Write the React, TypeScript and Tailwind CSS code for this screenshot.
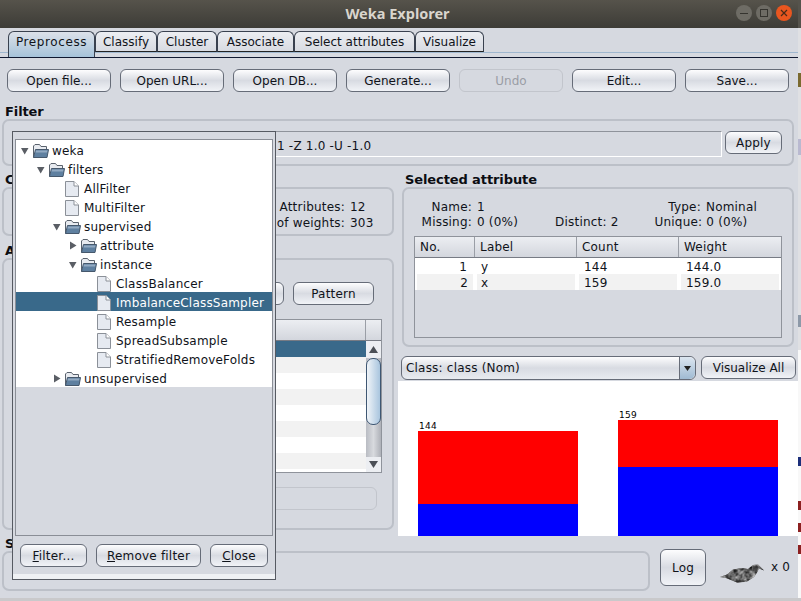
import React from "react";

const btn =
  "flex items-center justify-center rounded-[6px] border border-[#666c78] bg-linear-to-b from-[#fdfdfe] via-[#d8dbe2] to-[#f1f3f7] text-[12px] text-[#10131a]";

function Btn({ w, h = "h-[23px]", children }: { w: string; h?: string; children?: React.ReactNode }) {
  return <div className={`${btn} ${w} ${h} shrink-0`}>{children}</div>;
}

function Panel({ className, children }: { className: string; children?: React.ReactNode }) {
  return (
    <div className={`rounded-[7px] border-2 border-[#bcc0c8] bg-[#d6d9e0] ${className}`}>{children}</div>
  );
}

const Label = ({ children }: { children: React.ReactNode }) => (
  <div className="h-[15px] pl-[5px] text-[13px] font-bold leading-[15px] tracking-[-0.1px] text-[#0b0d12]">{children}</div>
);

function Folder() {
  return (
    <svg width="17" height="16" viewBox="0 0 17 16" className="shrink-0">
      <path d="M1.500 14.500V3L3 1.500h4.500L9 3.500h5.500V6" fill="#e8ebf0" stroke="#5a626d" />
      <path d="M1.500 14.500 3.500 6.500h13l-1.500 8z" fill="#5f80a0" stroke="#46586c" />
      <path d="M4 7.500h11.500l-.4 2H3.500z" fill="#93aac2" />
    </svg>
  );
}

function FileIcon() {
  return (
    <svg width="14" height="16" viewBox="0 0 14 16" className="shrink-0">
      <path d="M.5.5h8.500l4.500 4.500v10.500H.5z" fill="#e6eaf1" stroke="#8b9098" />
      <path d="M9 .5v4.500h4.500" fill="#fff" stroke="#8b9098" />
    </svg>
  );
}

function Arrow({ open }: { open: boolean }) {
  return (
    <svg width="12" height="12" viewBox="0 0 12 12" className="shrink-0">
      {open ? <path d="M1 3h7.500L4.700 9.500z" fill="#5a5e65" /> : <path d="M2 1.500 8.500 5.500 2 9.500z" fill="#5a5e65" />}
    </svg>
  );
}

type Node = { t: string; l: number; kind: "open" | "closed" | "leaf"; sel?: boolean };
const tree: Node[] = [
  { t: "weka", l: 0, kind: "open" },
  { t: "filters", l: 1, kind: "open" },
  { t: "AllFilter", l: 2, kind: "leaf" },
  { t: "MultiFilter", l: 2, kind: "leaf" },
  { t: "supervised", l: 2, kind: "open" },
  { t: "attribute", l: 3, kind: "closed" },
  { t: "instance", l: 3, kind: "open" },
  { t: "ClassBalancer", l: 4, kind: "leaf" },
  { t: "ImbalanceClassSampler", l: 4, kind: "leaf", sel: true },
  { t: "Resample", l: 4, kind: "leaf" },
  { t: "SpreadSubsample", l: 4, kind: "leaf" },
  { t: "StratifiedRemoveFolds", l: 4, kind: "leaf" },
  { t: "unsupervised", l: 2, kind: "closed" },
];

function TreeRow({ n }: { n: Node }) {
  return (
    <div
      className={`flex h-[19px] items-center pt-[2px] text-[12px] ${n.sel ? "bg-[#39698a] text-white" : "bg-white text-[#10131a]"}`}
      style={{ paddingLeft: 4 + 16 * n.l }}
    >
      {n.kind === "leaf" ? (
        <span className="flex w-[32px] pl-[13px]"><FileIcon /></span>
      ) : (
        <>
          <Arrow open={n.kind === "open"} />
          <span className="flex w-[20px]"><Folder /></span>
        </>
      )}
      <span>{n.t}</span>
    </div>
  );
}

function Popup() {
  return (
    <div className="absolute left-[12px] top-[131px] flex h-[449px] w-[264px] flex-col border border-[#565a62] bg-[#d6d9e0]">
      <div className="mx-[2px] mt-[7px] h-[397px] border border-[#8a8e96] bg-[#d6d9e0]">
        {tree.map((n) => (
          <TreeRow key={n.t} n={n} />
        ))}
      </div>
      <div className="flex gap-[9px] pl-[7px] pt-[8px]">
        <Btn w="w-[67px]"><span><u>F</u>ilter...</span></Btn>
        <Btn w="w-[105px]"><span><u>R</u>emove filter</span></Btn>
        <Btn w="w-[58px]"><span><u>C</u>lose</span></Btn>
      </div>
      <div className="mt-auto h-[5px] bg-[#eff1f4]" />
    </div>
  );
}

const tabs: [string, string][] = [
  ["Classify", "w-[62px]"],
  ["Cluster", "w-[60px]"],
  ["Associate", "w-[77px]"],
  ["Select attributes", "w-[121px]"],
  ["Visualize", "w-[69px]"],
];

const birdPath =
  "M0 15 7 12.500 13 7.500 22 6 28 7 33 3 38 2.500 41 5.500 44 8.500 39 6.500 37 10.500 34 15 27 19.500 17 20.500 11 18 6 16z";

function Bird() {
  return (
    <svg width="46" height="22" viewBox="0 0 46 22">
      <defs>
        <filter id="mottle" x="0" y="0" width="100%" height="100%" colorInterpolationFilters="sRGB">
          <feTurbulence type="fractalNoise" baseFrequency="0.22" numOctaves="2" seed="7" result="n" />
          <feColorMatrix in="n" type="matrix" values="1.500 0 0 0 -0.350  1.500 0 0 0 -0.350  1.500 0 0 0 -0.350  0 0 0 0 1" result="g" />
          <feComposite in="g" in2="SourceAlpha" operator="in" />
        </filter>
      </defs>
      <path d={birdPath} fill="#5c5c5c" />
      <path d={birdPath} fill="#000" filter="url(#mottle)" opacity="0.750" />
      <path d="M33 4 37 3.500 38 7 36 10 33 9z" fill="#333" opacity="0.700" />
      <path d="M16 19 27 18 24 20 17 20.500z" fill="#2e2e2e" opacity="0.600" />
    </svg>
  );
}

const leftRows = [0, 1, 2, 3, 4, 5, 6, 7];

export default function App() {
  return (
    <div className="relative h-[601px] w-[801px] overflow-hidden bg-[#c9c9cb] font-['DejaVu_Sans',sans-serif] tracking-[0.2px]">
      <div className="flex h-[598px] w-[798px] flex-col bg-[#d6d9e0]">
        {/* title bar */}
        <div className="relative flex h-[28px] shrink-0 items-center justify-center bg-linear-to-b from-[#56534b] to-[#3d3c37]">
          <span className="pr-[3px] font-['Noto_Sans',sans-serif] text-[14.500px] font-bold tracking-normal text-[#d9d5cd]">Weka Explorer</span>
          <div className="absolute right-[6px] top-[5px] flex gap-[4px]">
            <div className="flex h-[16px] w-[16px] items-center justify-center rounded-full bg-[#6e6c65]">
              <div className="h-[1px] w-[8px] bg-[#35342f]" />
            </div>
            <div className="flex h-[16px] w-[16px] items-center justify-center rounded-full bg-[#6e6c65]">
              <div className="h-[8px] w-[8px] border border-[#35342f]" />
            </div>
            <div className="flex h-[16px] w-[16px] items-center justify-center rounded-full bg-[#e9561f]">
              <svg width="8" height="8" viewBox="0 0 8 8"><path d="M1 1l6 6M7 1 1 7" stroke="#4a2a18" strokeWidth="1.200" /></svg>
            </div>
          </div>
        </div>

        {/* tabs */}
        <div className="flex h-[29px] shrink-0 flex-col">
          <div className="mt-[3px] flex h-[21px] pl-[8px]">
            <div className="z-10 flex h-[26px] w-[87px] items-center justify-center rounded-t-[6px] border border-b-0 border-[#39414f] bg-linear-to-b from-[#dce1e9] to-[#a6c3da] pb-[5px] text-[12px] tracking-[0.6px] text-[#10131a]">
              Preprocess
            </div>
            {tabs.map(([t, w]) => (
              <div key={t} className={`flex h-[21px] items-center justify-center rounded-t-[6px] border border-b-[#222] border-[#39414f] bg-linear-to-b from-[#eceef2] to-[#d8dbe2] text-[12px] tracking-normal text-[#10131a] ${w}`}>
                {t}
              </div>
            ))}
          </div>
          <div className="h-[5px] border-t border-[#9fb7cf] bg-[#d6d9e0]" />
        </div>
        <div className="h-[1px] shrink-0 bg-[#0f1830]" />

        {/* toolbar */}
        <div className="mt-[11px] flex shrink-0 gap-[9px] pl-[7px] tracking-normal">
          <Btn w="w-[104px]">Open file...</Btn>
          <Btn w="w-[104px]">Open URL...</Btn>
          <Btn w="w-[104px]">Open DB...</Btn>
          <Btn w="w-[104px]">Generate...</Btn>
          <div className="flex h-[23px] w-[104px] shrink-0 items-center justify-center rounded-[6px] border border-[#c2c5cc] bg-[#d6d9e0] text-[12px] text-[#9a9da5]">Undo</div>
          <Btn w="w-[104px]">Edit...</Btn>
          <Btn w="w-[104px]">Save...</Btn>
        </div>

        {/* filter */}
        <div className="mt-[12px] shrink-0">
          <Label>Filter</Label>
          <Panel className="ml-[2px] flex h-[47px] w-[792px] items-center">
            <div className="ml-[8px] mt-[3px] flex h-[26px] w-[710px] items-center border border-[#8f939b] border-b-white border-r-white pl-[264px] pt-[3px] text-[12px] text-[#10131a]">
              1 -Z 1.0 -U -1.0
            </div>
            <Btn w="ml-[3px] w-[57px]">Apply</Btn>
          </Panel>
        </div>

        {/* main */}
        <div className="mt-[6px] flex h-[364px] shrink-0">
          <div className="w-[398px] shrink-0">
            <Label>Current relation</Label>
            <Panel className="ml-[2px] flex h-[49px] w-[392px] items-center justify-end pr-[11px] pt-[6px] text-[12px] leading-[16px] text-[#10131a]">
              <div>
                <div className="flex justify-end"><span>Attributes:</span><span className="w-[36px] pl-[5px]">12</span></div>
                <div className="flex justify-end"><span>of weights:</span><span className="w-[36px] pl-[5px]">303</span></div>
              </div>
            </Panel>
            <div className="mt-[7px]"><Label>Attributes</Label></div>
            <Panel className="ml-[2px] flex h-[272px] w-[392px] flex-col pr-[10px]">
              <div className="mt-[22px] flex justify-end gap-[9px] pr-[8px]">
                <Btn w="w-[100px]" />
                <Btn w="w-[81px]">Pattern</Btn>
              </div>
              <div className="ml-auto mt-[14px] h-[154px] w-[370px] border border-[#8f939b] bg-white">
                <div className="flex h-[21px] border-b border-[#777b84] bg-linear-to-b from-[#eceef2] to-[#d3d6dd]">
                  <div className="flex-1 border-r border-[#9a9ea6]" />
                  <div className="w-[15px]" />
                </div>
                <div className="flex">
                  <div className="flex-1">
                    {leftRows.map((i) => (
                      <div key={i} className={`h-[16px] ${i === 0 ? "bg-[#39698a]" : i % 2 === 1 ? "bg-[#f2f2f2]" : "bg-white"}`} />
                    ))}
                  </div>
                  <div className="relative flex h-[131px] w-[15px] flex-col bg-linear-to-r from-[#b9bcc3] via-[#d8dade] to-[#aeb1b8]">
                    <div className="flex h-[17px] items-center justify-center bg-[#eceef2]">
                      <svg width="9" height="7" viewBox="0 0 9 7"><path d="M4.500 0 9 7H0z" fill="#4b4f56" /></svg>
                    </div>
                    <div className="h-[67px] rounded-[7px] border border-[#3e5773] bg-linear-to-r from-[#f0f4f8] to-[#a9c5de]" />
                    <div className="mt-auto flex h-[15px] items-center justify-center bg-[#eceef2]">
                      <svg width="9" height="7" viewBox="0 0 9 7"><path d="M0 0h9L4.500 7z" fill="#4b4f56" /></svg>
                    </div>
                  </div>
                </div>
              </div>
              <div className="ml-auto mr-[5px] mt-[14px] h-[23px] w-[360px] rounded-[6px] border border-[#c2c5cc]" />
            </Panel>
          </div>

          <div className="w-[400px] shrink-0">
            <div className="pl-[2px]"><Label>Selected attribute</Label></div>
            <Panel className="ml-[4px] h-[160px] w-[392px] text-[12px] text-[#10131a]">
              <div className="h-[47px]">
                <div className="flex pt-[11px] leading-[15px]">
                  <div className="w-[68px] text-right">Name:</div>
                  <div className="pl-[5px]">1</div>
                  <div className="ml-auto mr-[35px]"><span>Type:</span><span className="pl-[5px]">Nominal</span></div>
                </div>
                <div className="flex leading-[15px]">
                  <div className="w-[68px] text-right">Missing:</div>
                  <div className="pl-[5px]">0 (0%)</div>
                  <div className="ml-[37px]">Distinct: 2</div>
                  <div className="ml-[36px]">Unique: 0 (0%)</div>
                </div>
              </div>
              <div className="mx-[10px] h-[102px] w-[368px] border border-[#8f939b]">
                <div className="flex h-[21px] border-b border-[#777b84] bg-linear-to-b from-[#eceef2] to-[#d3d6dd]">
                  <div className="flex w-[60px] items-center border-r border-[#9a9ea6] pl-[5px]">No.</div>
                  <div className="flex w-[102px] items-center border-r border-[#9a9ea6] pl-[5px]">Label</div>
                  <div className="flex w-[102px] items-center border-r border-[#9a9ea6] pl-[5px]">Count</div>
                  <div className="flex flex-1 items-center pl-[5px]">Weight</div>
                </div>
                <div className="flex h-[16px] items-center bg-white pt-[1px]">
                  <div className="w-[60px] pr-[8px] text-right">1</div>
                  <div className="w-[102px] pl-[6px]">y</div>
                  <div className="w-[102px] pl-[7px]">144</div>
                  <div className="flex-1 pl-[7px]">144.0</div>
                </div>
                <div className="flex h-[16px] items-center gap-[4px] bg-white px-[2px]">
                  <div className="flex h-[16px] w-[56px] items-center justify-end bg-[#f2f2f2] pr-[5px] pt-[1px]">2</div>
                  <div className="flex h-[16px] w-[98px] items-center bg-[#f2f2f2] pl-[4px] pt-[1px]">x</div>
                  <div className="flex h-[16px] w-[98px] items-center bg-[#f2f2f2] pl-[5px] pt-[1px]">159</div>
                  <div className="flex h-[16px] flex-1 items-center bg-[#f2f2f2] pl-[5px] pt-[1px]">159.0</div>
                </div>
              </div>
            </Panel>
            <div className="mt-[9px] flex h-[24px] gap-[5px] pl-[3px]">
              <div className="flex h-[24px] w-[295px] items-center rounded-[6px] border border-[#666c78] bg-linear-to-b from-[#fdfdfe] via-[#d8dbe2] to-[#e8ebf0] text-[12px] text-[#10131a]">
                <span className="flex-1 pl-[4px]">Class: class (Nom)</span>
                <span className="flex h-full w-[16px] items-center justify-center rounded-r-[6px] border-l border-[#666c78] bg-linear-to-b from-[#dce6f0] to-[#9fbad2]">
                  <svg width="7" height="5" viewBox="0 0 7 5"><path d="M0 0h7L3.500 5z" fill="#222" /></svg>
                </span>
              </div>
              <Btn w="w-[95px] tracking-normal" h="h-[23px]">Visualize All</Btn>
            </div>
            <div className="mt-[1px] flex h-[155px] gap-[40px] overflow-hidden bg-white pl-[20px]">
              <div className="flex w-[160px] flex-col pt-[41px]">
                <div className="h-[9px] pl-[1px] text-[9px] leading-[9px] tracking-[0.3px] text-black">144</div>
                <div className="h-[73px] bg-[#ff0000]" />
                <div className="flex-1 bg-[#0000ff]" />
              </div>
              <div className="flex w-[160px] flex-col pt-[30px]">
                <div className="h-[9px] pl-[1px] text-[9px] leading-[9px] tracking-[0.3px] text-black">159</div>
                <div className="h-[47px] bg-[#ff0000]" />
                <div className="flex-1 bg-[#0000ff]" />
              </div>
            </div>
          </div>
        </div>

        {/* status */}
        <div className="flex shrink-0">
          <div className="w-[652px]">
            <Label>Status</Label>
            <Panel className="ml-[2px] h-[40px] w-[648px]" />
          </div>
          <div className="ml-[8px] mt-[13px]">
            <Btn w="w-[46px]" h="h-[37px]">Log</Btn>
          </div>
          <div className="ml-[14px] mt-[26px]"><Bird /></div>
          <div className="ml-[5px] mt-[22px] text-[12px] text-[#10131a]">x 0</div>
        </div>
      </div>

      {/* what shows of the desktop beside the window */}
      <div className="absolute right-0 top-0 h-[28px] w-[3px] bg-[#55534c]" />
      <div className="absolute right-0 top-[28px] flex h-[570px] w-[3px] flex-col bg-[#f8f8f8]">
        <div className="h-[322px] bg-[#dfe0e3]">
          <div className="mt-[45px] h-[14px] bg-[#7a6a30]" />
          <div className="mt-[52px] h-[16px] bg-[#b9b9d0]" />
          <div className="mt-[160px] h-[12px] bg-[#8d99a8]" />
        </div>
        <div className="mt-[107px] h-[9px] bg-[#1c2f7a]" />
        <div className="mt-[35px] h-[9px] bg-[#8c2020]" />
        <div className="mt-[13px] h-[9px] bg-[#8c2020]" />
        <div className="mt-[13px] h-[9px] bg-[#8c2020]" />
      </div>
      <Popup />
    </div>
  );
}
